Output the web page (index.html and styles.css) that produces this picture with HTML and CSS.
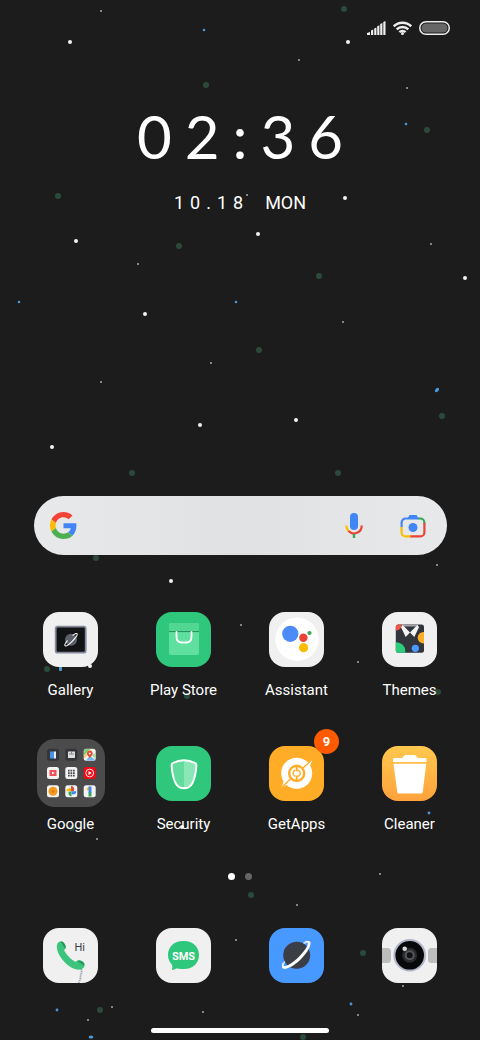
FILE: index.html
```html
<!DOCTYPE html>
<html lang="en">
    <head>
        <meta charset="utf-8">
        <meta name="viewport" content="width=device-width, initial-scale=1">
        <title>Home screen</title>
        <link rel="stylesheet" href="styles.css">
    </head>

    <body>
        <svg class="wallpaper" viewBox="0 0 480 1040" preserveAspectRatio="xMidYMin slice" aria-hidden="true">
            <g fill="#2b4a3b">
                <circle cx="344" cy="9" r="3"/><circle cx="206" cy="85" r="3"/>
                <circle cx="427" cy="130" r="3"/><circle cx="58" cy="196" r="3"/>
                <circle cx="179" cy="246" r="3"/><circle cx="319" cy="276" r="3"/>
                <circle cx="259" cy="350" r="3"/><circle cx="442" cy="416" r="3"/>
                <circle cx="132" cy="473" r="3"/><circle cx="338" cy="473" r="3"/>
                <circle cx="96" cy="558" r="3"/><circle cx="47" cy="669" r="3"/>
                <circle cx="187" cy="696" r="3"/><circle cx="438" cy="692" r="3"/>
                <circle cx="72" cy="828" r="3"/><circle cx="251" cy="895" r="3"/>
                <circle cx="363" cy="953" r="3"/><circle cx="100" cy="1010" r="3"/>
                <circle cx="303" cy="1037" r="3"/>
            </g>
            <g fill="#f2f2f2">
                <circle cx="70" cy="42" r="2"/><circle cx="348" cy="42" r="2"/>
                <circle cx="345" cy="198" r="2"/><circle cx="76" cy="241" r="2"/>
                <circle cx="258" cy="234" r="2"/><circle cx="465" cy="278" r="2"/>
                <circle cx="145" cy="314" r="2"/><circle cx="200" cy="425" r="2"/>
                <circle cx="296" cy="420" r="2"/><circle cx="52" cy="447" r="2"/>
                <circle cx="171" cy="581" r="2"/><circle cx="90" cy="666" r="2"/>
                <circle cx="182" cy="827" r="2"/>
            </g>
            <g fill="#a8a8a8">
                <circle cx="101" cy="11" r="1"/><circle cx="299" cy="60" r="1"/>
                <circle cx="407" cy="88" r="1"/><circle cx="247" cy="195" r="1"/>
                <circle cx="431" cy="244" r="1"/><circle cx="138" cy="264" r="1"/>
                <circle cx="343" cy="322" r="1"/><circle cx="211" cy="363" r="1"/>
                <circle cx="101" cy="382" r="1"/><circle cx="437" cy="565" r="1"/>
                <circle cx="241" cy="625" r="1"/><circle cx="358" cy="662" r="1"/>
                <circle cx="97" cy="839" r="1"/><circle cx="380" cy="874" r="1"/>
                <circle cx="297" cy="905" r="1"/><circle cx="236" cy="940" r="1"/>
                <circle cx="403" cy="986" r="1"/><circle cx="112" cy="1007" r="1"/>
                <circle cx="203" cy="1012" r="1"/><circle cx="358" cy="1015" r="1"/>
                <circle cx="88" cy="1020" r="1"/>
            </g>
            <g fill="#4a98d8">
                <circle cx="204" cy="30" r="1.3"/><circle cx="406" cy="124" r="1.3"/>
                <circle cx="19" cy="302" r="1.3"/><circle cx="236" cy="302" r="1.3"/>
                <ellipse cx="437" cy="390" rx="2.6" ry="1.6" transform="rotate(-45 437 390)"/>
                <rect x="59" y="664" width="3" height="7" rx="1"/>
                <circle cx="429" cy="813" r="1.4"/><circle cx="57" cy="1010" r="1.4"/>
                <circle cx="351" cy="1004" r="1.4"/>
                <ellipse cx="91" cy="1037" rx="2.4" ry="1.5"/>
            </g>
        </svg>

        <main class="screen">
            <header class="status">
                <svg class="signal" width="19" height="14" viewBox="0 0 19 14" fill="#eee" role="img" aria-label="Signal">
                    <path d="M0 14v-2l3-1v3zM4 14v-4.500l2.200-1v5.500zM7.200 14V7.500l2.200-1V14zM10.200 14V5.200l2.200-1V14zM13.200 14V3l2.200-1v12zM16.300 14V1l2.200-1v14z"/>
                </svg>
                <svg width="19" height="14" viewBox="0 0 19 14" fill="none" stroke="#eee" stroke-width="2.500" role="img" aria-label="Wi-Fi">
                    <path d="M.8 5.300a12.400 12.400 0 0 1 17.400 0M3.700 8.400a8.300 8.300 0 0 1 11.600 0M6.400 11.200a4.500 4.500 0 0 1 6.200 0"/>
                    <circle cx="9.500" cy="12.500" r="1.500" fill="#eee" stroke="none"/>
                </svg>
                <svg width="31" height="14" viewBox="0 0 31 14" role="img" aria-label="Battery">
                    <rect x=".75" y=".75" width="29.500" height="12.500" rx="6.250" fill="none" stroke="#eee" stroke-width="1.500"/>
                    <rect x="2.500" y="2.500" width="26" height="9" rx="4.500" fill="#666"/>
                </svg>
            </header>

            <section class="clock">
                <div class="time">
                    <span>0</span><span>2</span><span>:</span><span>3</span><span>6</span>
                </div>
                <div class="date">
                    <span>1</span><span>0</span><span>.</span><span>1</span><span>8</span>
                    <span class="weekday">MON</span>
                </div>
            </section>

            <form class="search">
                <svg width="27" height="27" viewBox="0 0 48 48" aria-hidden="true">
                    <path fill="#f44336" d="M24 9.500c3.540 0 6.710 1.220 9.210 3.600l6.850-6.850C35.900 2.380 30.470 0 24 0 14.620 0 6.510 5.380 2.560 13.220l7.980 6.190C12.430 13.720 17.740 9.500 24 9.500z"/>
                    <path fill="#4285f4" d="M46.980 24.550c0-1.570-.15-3.090-.38-4.550H24v9.020h12.940c-.58 2.960-2.260 5.480-4.780 7.180l7.730 6c4.510-4.180 7.090-10.360 7.090-17.650z"/>
                    <path fill="#fbbc05" d="M10.530 28.590c-.48-1.450-.76-2.990-.76-4.590s.27-3.140.76-4.590l-7.980-6.190C.92 16.460 0 20.120 0 24c0 3.880.92 7.540 2.560 10.780l7.970-6.190z"/>
                    <path fill="#4caf50" d="M24 48c6.480 0 11.930-2.130 15.890-5.810l-7.730-6c-2.150 1.450-4.920 2.300-8.160 2.300-6.260 0-11.570-4.220-13.470-9.910l-7.980 6.190C6.510 42.620 14.620 48 24 48z"/>
                </svg>
                <input type="search" aria-label="Search">
                <button type="button" aria-label="Voice search">
                    <svg width="18" height="26" viewBox="0 0 18 26" fill="none" stroke-width="2.200">
                        <rect x="5" y="0" width="8" height="17" rx="4" fill="#4285f4"/>
                        <path stroke="#fbbc05" d="M1.300 12.500c0 2.500 1 4.500 2.500 5.900"/>
                        <path stroke="#ea4335" d="M3.500 18.100a7.700 7.700 0 0 0 13.200-5.600"/>
                        <path stroke="#34a853" stroke-width="2.400" d="M9 21v4"/>
                    </svg>
                </button>
                <button type="button" aria-label="Search with camera">
                    <svg width="26" height="24" viewBox="0 0 26 24" fill="none" stroke-width="2.200">
                        <path stroke="#4285f4" d="M1.600 13V8.500a4 4 0 0 1 4-4H19"/>
                        <path fill="#4285f4" d="M7.500 4.500 9.500 1h7l2 3.500z"/>
                        <path stroke="#34a853" d="M18.500 4.500h1.900a4 4 0 0 1 4 4V9.500"/>
                        <path stroke="#ea4335" d="M24.400 9v9.400a4 4 0 0 1-4 4H10"/>
                        <path stroke="#fbbc05" d="M1.600 13v5.400a4 4 0 0 0 4 4H10.500"/>
                        <circle cx="13" cy="13.500" r="4.500" fill="#4285f4"/>
                    </svg>
                </button>
            </form>

            <nav class="apps" aria-label="Apps">
                <a class="app" href="#gallery">
                    <span class="icon light">
                        <svg viewBox="0 0 55 55" aria-hidden="true">
                            <rect x="12.700" y="14.700" width="30" height="26" rx="2" fill="#131416" stroke="#858899" stroke-width="1.800"/>
                            <circle cx="28" cy="27.700" r="6" fill="#5b6069"/>
                            <ellipse cx="28" cy="27.700" rx="8.500" ry="2" fill="none" stroke="#fff" stroke-width="1.100" transform="rotate(-45 28 27.700)"/>
                            <path fill="#5b6069" d="m23.800 27.500 4.500-4.500 2.500 1-5.500 5.500z"/>
                        </svg>
                    </span>
                    Gallery
                </a>
                <a class="app" href="#play-store">
                    <span class="icon green">
                        <svg viewBox="0 0 55 55" aria-hidden="true">
                            <rect x="13" y="11" width="30" height="32" rx="2" fill="#60e09f"/>
                            <path fill="#52d793" d="M13 13a2 2 0 0 1 2-2h26a2 2 0 0 1 2 2v6.500H13z"/>
                            <path stroke="#218d58" stroke-width="1" d="M13 19.600h30"/>
                            <path fill="none" stroke="#fff" stroke-width="1.800" stroke-linecap="round" d="M20.500 20v4.500c0 4 2.500 6 5.500 6h4c3 0 5.500-2 5.500-6V20"/>
                        </svg>
                    </span>
                    Play Store
                </a>
                <a class="app" href="#assistant">
                    <span class="icon light">
                        <svg viewBox="0 0 55 55" aria-hidden="true">
                            <circle cx="28" cy="27.300" r="21.700" fill="#fff"/>
                            <circle cx="21.300" cy="21.800" r="8.100" fill="#4c8bf5"/>
                            <circle cx="34.400" cy="25.700" r="4.200" fill="#ea4335"/>
                            <circle cx="34.600" cy="35.700" r="4.600" fill="#fbbc05"/>
                            <circle cx="40.500" cy="21" r="2.100" fill="#34a853"/>
                        </svg>
                    </span>
                    Assistant
                </a>
                <a class="app" href="#themes">
                    <span class="icon light">
                        <svg viewBox="0 0 55 55" aria-hidden="true">
                            <clipPath id="shirt"><rect x="13.800" y="12.500" width="28.200" height="28.200" rx="2.500"/></clipPath>
                            <g clip-path="url(#shirt)">
                                <path fill="#33353d" d="M13 12h30v30H13z"/>
                                <circle cx="14.500" cy="13.500" r="5" fill="#f4564a"/>
                                <circle cx="14.500" cy="39" r="8.800" fill="#2ecb7b"/>
                                <circle cx="41.500" cy="25.700" r="5.800" fill="#ffad27"/>
                                <circle cx="33.300" cy="36.300" r="3.600" fill="#4a9bff"/>
                                <path fill="#a4a5a9" d="M20.500 12.500h15l-1 2h-13z"/>
                            </g>
                            <path fill="#f3f3f3" d="m20.500 12.800-1.500 2.500 4.700 9.700 4.300-4.500zM35.500 12.800l1.500 2.500-4.700 9.700-4.300-4.500z"/>
                        </svg>
                    </span>
                    Themes
                </a>
                <a class="app" href="#google">
                    <span class="icon folder">
                        <svg viewBox="0 0 68 68" aria-hidden="true">
                            <g fill="#33353b">
                                <rect x="10" y="9.700" width="12" height="12" rx="2.500"/>
                                <rect x="28.300" y="9.700" width="12" height="12" rx="2.500"/>
                            </g>
                            <g fill="#f3f3f3">
                                <rect x="46.700" y="9.700" width="12" height="12" rx="2.500"/>
                                <rect x="10" y="28" width="12" height="12" rx="2.500"/>
                                <rect x="28.300" y="28" width="12" height="12" rx="2.500"/>
                                <rect x="10" y="46.300" width="12" height="12" rx="2.500"/>
                                <rect x="28.300" y="46.300" width="12" height="12" rx="2.500"/>
                                <rect x="46.700" y="46.300" width="12" height="12" rx="2.500"/>
                            </g>
                            <rect x="46.700" y="28" width="12" height="12" rx="2.500" fill="#f40612"/>
                            <path fill="#4a90e8" d="M13 12.500h4v7h-4z"/><path fill="#e8edf5" d="M17 12.500h2v7h-2z"/>
                            <path fill="#ddd" d="M31 12.500h7v6.500h-7z"/><path fill="#888" d="M32 14.500h5v1h-5zM34 12.500h1v2h-1z"/>
                            <path fill="#7ccf78" d="M47 12.500a2.500 2.500 0 0 1 2.500-2.500h4L47 16.500z"/>
                            <path fill="#f7cf4a" d="m47 17 6.500-6.500 1.500 1L47 19.500z"/>
                            <path fill="#78b7ee" d="m49 21.500 4-5 5.500 5z"/>
                            <path fill="#a7da8c" d="M58.500 14v6l-4-4z"/>
                            <path fill="#ea4335" d="M52.800 19c-1-2-2.800-2.500-2.800-4.500a2.800 2.800 0 0 1 5.600 0c0 2-1.800 2.500-2.800 4.500z"/>
                            <circle cx="52.800" cy="14.500" r="1.100" fill="#fff"/>
                            <rect x="12.500" y="31" width="7" height="6" fill="#f05058"/><path fill="#fff" d="m15 32.700 3 1.300-3 1.300z"/>
                            <g fill="#484a50">
                                <path d="M31 30.700h1.700v1.700H31zM33.500 30.700h1.700v1.700h-1.700zM36 30.700h1.700v1.700H36zM31 33.200h1.700v1.700H31zM33.500 33.200h1.700v1.700h-1.700zM36 33.200h1.700v1.700H36zM31 35.700h1.700v1.700H31zM33.500 35.700h1.700v1.700h-1.700zM36 35.700h1.700v1.700H36z"/>
                            </g>
                            <circle cx="52.700" cy="34" r="3.900" fill="none" stroke="#fff" stroke-width=".9"/>
                            <path fill="#fff" d="m51.500 32 3.300 2-3.300 2z"/>
                            <circle cx="16" cy="52.300" r="4.500" fill="#f59a23"/><circle cx="16" cy="52.300" r="1.500" fill="#e27f10"/>
                            <path fill="#ea4335" d="M34.300 47.300a2.500 2.500 0 0 1 0 5z"/>
                            <path fill="#ea4335" d="M34 47.300c2.800 0 3.500 2.500 3 4.500l-2.700.5z"/>
                            <path fill="#4285f4" d="M39.300 52.300c0 2.800-2.500 3.500-4.500 3l-.5-3z"/>
                            <path fill="#34a853" d="M34.600 57.300c-2.800 0-3.500-2.500-3-4.500l2.700-.5z"/>
                            <path fill="#fbbc05" d="M29.300 52.300c0-2.800 2.500-3.500 4.500-3l.5 3z"/>
                            <path fill="#fbbc05" d="m49.500 49.500 3-2v3l-2 1.300z"/><path fill="#4285f4" d="M51.500 47.500h3V54h-3z"/><path fill="#34a853" d="M51.500 53.500h3v4h-3z"/>
                        </svg>
                    </span>
                    Google
                </a>
                <a class="app" href="#security">
                    <span class="icon green">
                        <svg viewBox="0 0 55 55" aria-hidden="true">
                            <path fill="#62dc9c" d="M28 14.500c-3 0-7.500 1-11 2.800-1 .5-1.300 1-1.200 2.200.5 8 1.700 13.500 4.200 18 1.700 3 4.500 4.700 8 4.700z"/>
                            <path fill="#8be8b6" d="M28 14.500c3 0 7.500 1 11 2.800 1 .5 1.300 1 1.200 2.200-.5 8-1.700 13.500-4.200 18-1.700 3-4.500 4.700-8 4.700z"/>
                            <path fill="none" stroke="#fff" stroke-width="2" d="M28 14.300c-3 0-7.700 1-11.200 2.800-1 .5-1.300 1.100-1.200 2.400.5 8 1.700 13.500 4.200 18 1.700 3.100 4.700 4.800 8.200 4.800s6.500-1.700 8.200-4.800c2.500-4.500 3.700-10 4.200-18 .1-1.300-.2-1.900-1.200-2.400-3.500-1.800-8.200-2.800-11.200-2.800z"/>
                        </svg>
                    </span>
                    Security
                </a>
                <a class="app" href="#getapps">
                    <span class="icon orange">
                        <svg viewBox="0 0 55 55" aria-hidden="true">
                            <circle cx="27.700" cy="27.300" r="15.500" fill="#fff"/>
                            <path fill="#fff" d="M34 18.500 43.300 14l-3.500 9zM21.500 37 12.500 41.500l3-9z"/>
                            <path fill="none" stroke="#ffac26" stroke-width="1.300" d="M42.500 14 33.500 22.500M13 41l9-8.500"/>
                            <circle cx="27.700" cy="27.300" r="7.500" fill="none" stroke="#ffac26" stroke-width="2.400"/>
                            <path stroke="#ffac26" stroke-width="1.900" d="M27.700 20.500v5M27.700 29.500v5"/>
                            <path fill="none" stroke="#ffac26" stroke-width="1.400" d="M26.300 24c-3 1.500-3 5 0 6.500M29.100 24c3 1.500 3 5 0 6.500"/>
                        </svg>
                        <span class="badge">9</span>
                    </span>
                    GetApps
                </a>
                <a class="app" href="#cleaner">
                    <span class="icon amber">
                        <svg viewBox="0 0 55 55" fill="#fff" aria-hidden="true">
                            <path d="M11 16v-2.500c0-1 .5-1.500 1.500-1.500h7.500l2.500-2.500c.3-.4.700-.5 1-.5h9c.4 0 .7.100 1 .5l2.500 2.500h7c1 0 1.500.5 1.500 1.500V16z"/>
                            <path d="M11.500 17.800h32.700l-3.400 28c-.2 1.200-.7 1.600-1.600 1.600H16.800c-1 0-1.500-.5-1.600-1.600z"/>
                        </svg>
                    </span>
                    Cleaner
                </a>
            </nav>

            <div class="pages">
                <span class="dot current"></span>
                <span class="dot"></span>
            </div>

            <nav class="dock" aria-label="Dock">
                <a class="app" href="#phone" aria-label="Phone">
                    <span class="icon light">
                        <svg viewBox="0 0 55 55" aria-hidden="true">
                            <path fill="none" stroke="#9aa3b5" stroke-width="1.800" stroke-dasharray="1.200 .7" d="M38 41c2 4-1 5-.5 8 .2 2-1 4-2 6"/>
                            <path fill="#3cc47c" d="M14.500 15.500c1.500-2.500 5-2.500 6.500-.5 1.500 1.800 2.500 4 1.300 5.600-.7 1-1.300 1.400-.8 2.400 1.700 3.500 6.500 8.500 10.300 10.500 1.200.5 1.900-.3 3-1 2-1 6 1 6.700 3.500.6 2.600-1.500 5-4 5.500-4.500.8-11-2-16-7.500-5-5.300-9.500-13.500-7-18.500z"/>
                            <path fill="#259a5c" d="M17.500 13.500c2-.3 3.500 1 4.300 2.700 1 2 1.200 3.500.3 4.600zM34 33c2-1.600 6.500.3 7.200 2.800.2.800 0 1.500-.2 2z"/>
                            <text class="hi" x="31.500" y="22.500">Hi</text>
                        </svg>
                    </span>
                </a>
                <a class="app" href="#messages" aria-label="Messages">
                    <span class="icon light">
                        <svg viewBox="0 0 55 55" aria-hidden="true">
                            <path fill="#2fc77b" d="M27 13h1c9 0 15 6 15 14s-6 14-15 14h-2c-2.500 0-4-.6-5.500-.5-1.300.2-2.500 1.500-3.700 1.500-.6 0-.8-.4-.7-1 .3-1.500.4-3-.3-4.500C13.500 34 12 31 12 27c0-8 6-14 15-14z"/>
                            <text class="sms" x="27.500" y="31.500" text-anchor="middle">SMS</text>
                        </svg>
                    </span>
                </a>
                <a class="app" href="#browser" aria-label="Browser">
                    <span class="icon blue">
                        <svg viewBox="0 0 55 55" aria-hidden="true">
                            <g transform="rotate(-44 27.700 27.300)">
                                <ellipse cx="27.700" cy="26.800" rx="18.500" ry="4.500" fill="none" stroke="#d8e8ff" stroke-width="1.400"/>
                                <circle cx="27.700" cy="27.300" r="13.500" fill="#3b3e47"/>
                                <path fill="#fff" d="M9 26c-.5 3 6 7 18.700 7s19.200-4 18.700-7c-.2-2-2-2.800-5-3.300 2 .8 3 1.500 3 2.600 0 2.500-6.500 4.600-16.700 4.600S11 27.800 11 25.300c0-1.100 1-1.800 3-2.600-3 .5-4.800 1.300-5 3.300z"/>
                            </g>
                        </svg>
                    </span>
                </a>
                <a class="app" href="#camera" aria-label="Camera">
                    <span class="icon light">
                        <svg viewBox="0 0 55 55" aria-hidden="true">
                            <path fill="#bcbdbd" d="M0 20h5.500a3.500 3.500 0 0 1 3.500 3.500v8a3.500 3.500 0 0 1-3.500 3.500H0zM55 20h-5.500a3.500 3.500 0 0 0-3.500 3.500v8a3.500 3.500 0 0 0 3.500 3.500H55z"/>
                            <circle cx="27.700" cy="27.300" r="15.300" fill="#08090a" stroke="#b2b5c8" stroke-width="2"/>
                            <circle cx="27.700" cy="27.300" r="7.500" fill="#2b2b2e"/>
                            <circle cx="27.700" cy="27.300" r="4" fill="#111" stroke="#55565c" stroke-width="2"/>
                            <circle cx="22.700" cy="20.700" r="2.300" fill="#d9d9d9"/>
                        </svg>
                    </span>
                </a>
            </nav>

            <div class="home-bar"></div>
        </main>
    </body>
</html>
```

FILE: styles.css
```css
* {
    box-sizing: border-box;
}

body {
    margin: 0;
    background: #1c1c1c;
    color: #fff;
    font-family: Roboto, "Noto Sans", sans-serif;
}

/* Starry backdrop, lies under everything */
.wallpaper {
    position: absolute;
    top: 0;
    left: 0;
    width: 100%;
    height: 100%;
    min-height: 100vh;
}

.screen {
    position: relative;
    display: flex;
    flex-direction: column;
    min-height: 100vh;
}

.status {
    display: flex;
    justify-content: flex-end;
    align-items: center;
    gap: 7px;
    padding: 21px 30px 0;
}

.clock {
    display: flex;
    flex-direction: column;
    align-items: center;
    margin-top: 71px;
}
.time {
    display: flex;
    gap: 13px;
    font-family: Lato, sans-serif;
    font-size: 60px;
    line-height: 60px;
}
.date {
    display: flex;
    gap: 6px;
    margin-top: 25px;
    font-size: 18px;
    line-height: 24px;
}
.weekday {
    margin-left: 16px;
}

.search {
    display: flex;
    align-items: center;
    height: 59px;
    margin: 281px 33px 0 34px;
    padding: 0 21px 0 16px;
    border-radius: 30px;
    background: linear-gradient(90deg, #e8e9eb, #e0e1e3 50%, #e8e9eb);
}
.search input {
    flex: 1;
    min-width: 0;
    height: 40px;
    margin: 0 12px;
    border: 0;
    outline: 0;
    background: none;
    color: #333;
    font: 16px Roboto, sans-serif;
}
.search button {
    display: flex;
    padding: 0;
    border: 0;
    background: none;
}
.search button + button {
    margin-left: 37px;
}

.apps, .dock {
    display: grid;
    grid-template-columns: repeat(4, 1fr);
    padding: 0 14px;
}
.apps {
    row-gap: 54px;
    margin-top: 57px;
}
.app {
    display: flex;
    flex-direction: column;
    align-items: center;
    gap: 13px;
    color: #fff;
    font-size: 15px;
    line-height: 20px;
    text-decoration: none;
}
.apps .app {
    height: 80px;
}

.icon {
    position: relative;
    width: 55px;
    height: 55px;
    border-radius: 16px;
}
.icon svg {
    display: block;
    border-radius: inherit;
}
.light {
    background: #f0f0f0;
}
.green {
    background: #2fc77b;
}
.orange {
    background: #ffac26;
}
.amber {
    background: linear-gradient(#ffc84d, #ffa23c);
}
.blue {
    background: #4798ff;
}
.folder {
    width: 68px;
    height: 68px;
    margin: -7px 0 -6px;
    border-radius: 18px;
    background: #4b4b4b;
}

.badge {
    position: absolute;
    top: -17px;
    right: -15px;
    width: 25px;
    height: 25px;
    border-radius: 50%;
    background: #ff5a00;
    font-size: 13px;
    font-weight: bold;
    line-height: 25px;
    text-align: center;
}

.hi {
    fill: #3a3d45;
    font-size: 11px;
}
.sms {
    fill: #fff;
    font-size: 11px;
    font-weight: bold;
}

.pages {
    display: flex;
    justify-content: center;
    gap: 10px;
    margin-top: 47px;
}
.dot {
    width: 7px;
    height: 7px;
    border-radius: 50%;
    background: #666;
}
.current {
    background: #fff;
}

.dock {
    margin-top: auto;
    padding-top: 40px;
}

.home-bar {
    width: 37%;
    height: 5px;
    margin: 45px auto 7px;
    border-radius: 3px;
    background: #fff;
}
```
